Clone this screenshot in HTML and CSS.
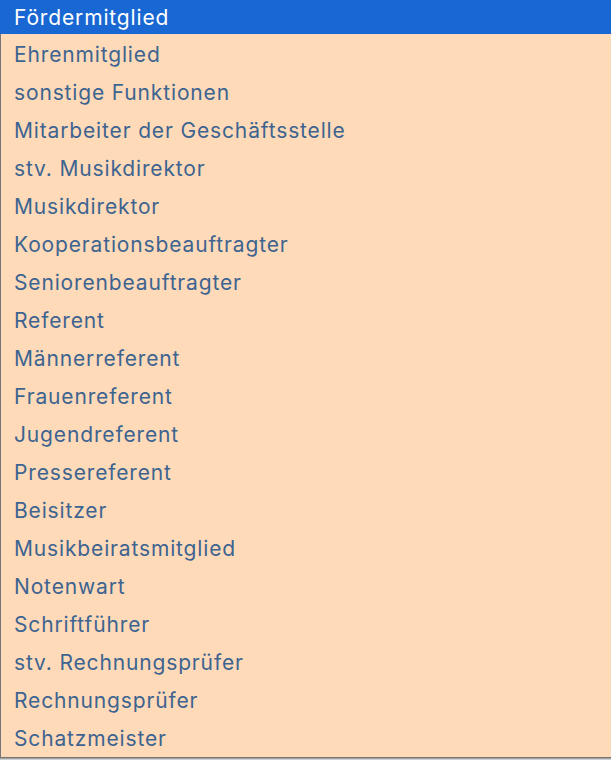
FILE: index.html
```html
<!DOCTYPE html>
<html lang="de">
<head>
<meta charset="utf-8">
<title>Funktionen</title>
<link rel="stylesheet" href="styles.css">
</head>
<body>
<div class="dropdown">
  <div class="opt selected">Fördermitglied</div>
  <div class="list">
    <div class="opt">Ehrenmitglied</div>
    <div class="opt">sonstige Funktionen</div>
    <div class="opt">Mitarbeiter der Geschäftsstelle</div>
    <div class="opt">stv. Musikdirektor</div>
    <div class="opt">Musikdirektor</div>
    <div class="opt">Kooperationsbeauftragter</div>
    <div class="opt">Seniorenbeauftragter</div>
    <div class="opt">Referent</div>
    <div class="opt">Männerreferent</div>
    <div class="opt">Frauenreferent</div>
    <div class="opt">Jugendreferent</div>
    <div class="opt">Pressereferent</div>
    <div class="opt">Beisitzer</div>
    <div class="opt">Musikbeiratsmitglied</div>
    <div class="opt">Notenwart</div>
    <div class="opt">Schriftführer</div>
    <div class="opt">stv. Rechnungsprüfer</div>
    <div class="opt">Rechnungsprüfer</div>
    <div class="opt">Schatzmeister</div>
  </div>
</div>
</body>
</html>
```
FILE: styles.css
```css
html, body {
  margin: 0;
  padding: 0;
  background: #ffffff;
}
.dropdown {
  width: 611px;
  height: 760px;
  overflow: hidden;
  background: #ffdab9;
  font-family: "Inter", "Open Sans", sans-serif;
  font-size: 21px;
  letter-spacing: 0.85px;
}
.opt {
  height: 38px;
  box-sizing: border-box;
  padding-top: 2px;
  display: flex;
  align-items: center;
  padding-left: 14px;
  color: #3d6490;
  white-space: nowrap;
}
.opt.selected {
  height: 34px;
  padding-top: 0;
  background: #1967d2;
  color: #ffffff;
}
.list {
  border-left: 1px solid #767676;
  border-bottom: 1px solid #767676;
  padding-bottom: 1px;
  box-shadow: 0 1px 0 #a3a3a3, 0 2px 0 #cfcfcf;
}
.list .opt {
  padding-left: 13px;
}
```
